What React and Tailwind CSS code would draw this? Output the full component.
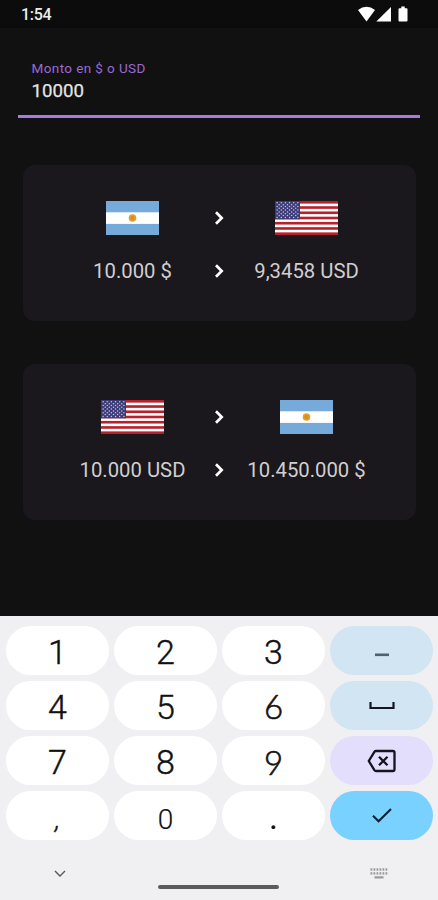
import React from "react";

const KEYS = [
  { id: "1" },
  { id: "2" },
  { id: "3" },
  { id: "minus" },
  { id: "4" },
  { id: "5" },
  { id: "6", style: "font-['Lato',sans-serif] text-[33px] font-light pt-[3px] [-webkit-text-stroke:0.6px_#111]" },
  { id: "space" },
  { id: "7" },
  { id: "8" },
  { id: "9", style: "font-['Lato',sans-serif] text-[33px] font-light pt-[3px] [-webkit-text-stroke:0.6px_#111]" },
  { id: "delete" },
  { id: ",", style: "font-['Roboto',sans-serif] text-[28px] font-light italic pt-[8px] [-webkit-text-stroke:0.4px_#111]" },
  { id: "0", style: "font-['Roboto',sans-serif] text-[28px] font-light pt-[8px] [-webkit-text-stroke:0.2px_#111]" },
  { id: ".", style: "font-['Roboto',sans-serif] text-[34px] font-normal pt-[3px]" },
  { id: "done" },
];

const FlagAR = () => (
  <svg width="53" height="34" viewBox="0 0 53 34">
    <rect width="53" height="34" fill="#75aadb" />
    <rect y="11.3" width="53" height="11.6" fill="#fff" />
    <circle cx="26.5" cy="17" r="3.8" fill="#e3a02f" />
    <circle cx="26.5" cy="17" r="2.2" fill="#d9901c" />
  </svg>
);

const FlagUS = () => (
  <svg width="63" height="34" viewBox="0 0 63 34">
    <rect width="63" height="34" fill="#fff" />
    {[0, 2, 4, 6, 8, 10, 12].map((i) => (
      <rect key={i} y={(i * 34) / 13} width="63" height={34 / 13} fill="#b8202c" />
    ))}
    <rect width="25" height="18.3" fill="#3c3b78" />
    {[0, 1, 2, 3, 4, 5, 6, 7, 8].map((row) =>
      [0, 1, 2, 3, 4, 5].map((col) =>
        row % 2 === 1 && col === 5 ? null : (
          <circle
            key={`${row}-${col}`}
            cx={2.1 + col * 4.15 + (row % 2) * 2.08}
            cy={1.8 + row * 1.83}
            r="0.75"
            fill="#c4c4e0"
          />
        )
      )
    )}
  </svg>
);

const Arrow = () => (
  <svg width="12" height="16" viewBox="0 0 12 16" fill="none" stroke="#fff" strokeWidth="2.7">
    <path d="M2 2.2 7.7 8 2 13.8" />
  </svg>
);

const Card = ({ from, to, fromText, toText }) => (
  <div className="grid h-[156px] grid-cols-[146px_28px_146px] grid-rows-[34px_28px] content-start items-center justify-center justify-items-center gap-y-[22px] rounded-xl bg-[#1a181c] pt-9 text-[20.3px] text-[#d0cfd1]">
    {from}
    <Arrow />
    {to}
    <span className="whitespace-nowrap">{fromText}</span>
    <Arrow />
    <span className="whitespace-nowrap">{toText}</span>
  </div>
);

const Key = ({ item }) => {
  const base = "flex items-center justify-center rounded-full";

  if (item.id === "minus") {
    return (
      <div className={`${base} bg-[#d1e5f2]`}>
        <svg width="14" height="4" viewBox="0 0 14 4" className="mt-[9px]">
          <rect y="0.5" width="14" height="2.6" fill="#50606c" />
        </svg>
      </div>
    );
  }
  if (item.id === "space") {
    return (
      <div className={`${base} bg-[#d1e5f2]`}>
        <svg width="26" height="9" viewBox="0 0 26 9" fill="none" stroke="#15171f" strokeWidth="2.2">
          <path d="M1.5 1v6h23V1" />
        </svg>
      </div>
    );
  }
  if (item.id === "delete") {
    return (
      <div className={`${base} bg-[#e4defd]`}>
        <svg width="30" height="24" viewBox="0 0 30 24" fill="none" stroke="#15131f" strokeWidth="2.3" className="mt-px">
          <path d="M9 2h16.8q1.7 0 1.7 1.7v16.6q0 1.7-1.7 1.7H9q-1 0-1.6-.9L1.8 12l5.6-9.1Q8 2 9 2Z" />
          <path d="m12 7.8 8.5 8.5m0-8.5L12 16.3" />
        </svg>
      </div>
    );
  }
  if (item.id === "done") {
    return (
      <div className={`${base} bg-[#78d1ff]`}>
        <svg width="20" height="15" viewBox="0 0 20 15" fill="none" stroke="#0a2230" strokeWidth="2.1">
          <path d="m1 7.7 5.6 5.6L19 1" />
        </svg>
      </div>
    );
  }
  return (
    <div
      className={`${base} bg-white leading-none text-[#111] ${
        item.style || "font-['Roboto',sans-serif] text-[34px] font-light pt-[3px] [-webkit-text-stroke:0.4px_#111]"
      }`}
    >
      {item.id}
    </div>
  );
};

const Keyboard = () => (
  <div className="h-[284px] bg-[#f0f0f3] pt-[9.5px]">
    <div className="grid grid-cols-[repeat(4,103px)] auto-rows-[49px] gap-x-[5px] gap-y-[6.3px] pl-[6px]">
      {KEYS.map((item) => (
        <Key key={item.id} item={item} />
      ))}
    </div>
    {/* Navigation row */}
    <div className="flex items-start justify-between pt-[26px] pr-[50px] pl-[54px]">
      <svg width="12" height="14" viewBox="0 0 12 14" fill="none" stroke="#55565a" strokeWidth="1.4">
        <path d="m1 5 5 5 5-5" />
      </svg>
      <div className="mt-[18.5px] h-1 w-[121px] rounded-full bg-[#5b5b5e]" />
      <svg width="18" height="14" viewBox="0 0 18 14" fill="#99999d">
        {[0.5, 3.5, 6.5, 9.5, 12.5, 15.5].map((x) => (
          <React.Fragment key={x}>
            <rect x={x} y="2.3" width="1.8" height="2.4" />
            <rect x={x} y="6.2" width="1.8" height="2.4" />
          </React.Fragment>
        ))}
        <rect x="4.5" y="10.3" width="9" height="2.2" />
      </svg>
    </div>
  </div>
);

const App = () => {
  return (
    <div className="flex h-[900px] w-[438px] flex-col overflow-hidden bg-[#111] font-['Roboto',sans-serif]">
      {/* Status bar */}
      <div className="flex h-7 items-center justify-between bg-[#0c0c0c] pr-[29px] pl-[21px]">
        <span className="pt-[2px] text-[16px] font-medium tracking-[-0.3px] text-[#ededed]">1:54</span>
        <svg width="52" height="18" viewBox="0 0 52 18" fill="#fff">
          <path d="M1 5.1Q9.5-1.4 18 5.1L9.5 16.5Z" />
          <path d="M34 2V16.5H19.3Z" />
          <path d="M42.5 3.3h1.8V1.5h3.4v1.8h1.8q1 0 1 1v11.2q0 1-1 1h-7q-1 0-1-1V4.3q0-1 1-1Z" />
        </svg>
      </div>

      {/* Amount field */}
      <div className="mx-[18px] mt-8 h-[58px] border-b-3 border-[#a879de] pl-[13.5px]">
        <div className="text-[13.5px] leading-4 tracking-[0.4px] text-[#9b69d6]">
          Monto en $ o USD
        </div>
        <div className="pt-[3px] text-[18.7px] leading-6 text-[#e4e4e4] [-webkit-text-stroke:0.25px_#e4e4e4]">
          10000
        </div>
      </div>

      <div className="mt-[47px] mr-[22px] ml-[23px] flex flex-1 flex-col gap-[43px]">
        <Card from={<FlagAR />} to={<FlagUS />} fromText="10.000 $" toText="9,3458 USD" />
        <Card from={<FlagUS />} to={<FlagAR />} fromText="10.000 USD" toText="10.450.000 $" />
      </div>

      <Keyboard />
    </div>
  );
};

export default App;
